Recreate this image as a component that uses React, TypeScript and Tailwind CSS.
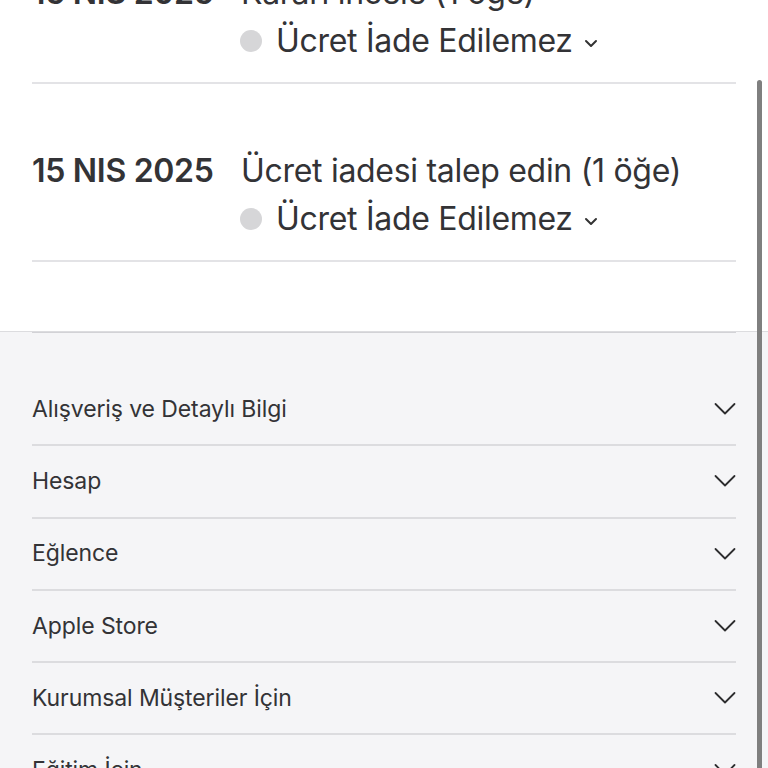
import React from 'react';

const font = { fontFamily: 'Inter, "Noto Sans", "Liberation Sans", sans-serif' };

function SmallChevron() {
  return (
    <svg width="16" height="10" viewBox="0 0 16 10" className="ml-[10px] mt-[4px]">
      <path d="M3 3 L8 8 L13 3" fill="none" stroke="#333" strokeWidth="2" strokeLinecap="round" strokeLinejoin="round" />
    </svg>
  );
}

function Chevron() {
  return (
    <svg width="22" height="14" viewBox="0 0 22 14">
      <path d="M1.5 2 L11 11.5 L20.5 2" fill="none" stroke="#2d2d2f" strokeWidth="1.8" strokeLinecap="round" strokeLinejoin="round" />
    </svg>
  );
}

interface RowProps {
  date: string;
  title: string;
  status: string;
  className?: string;
}

function RefundRow({ date, title, status, className = '' }: RowProps) {
  return (
    <div className={`border-b-2 border-[#e3e3e6] pb-[17px] ${className}`}>
      <div className="flex h-[48px] items-center">
        <span className="w-[209px] shrink-0 text-[32px] font-semibold tracking-[-0.3px] text-[#333336]">{date}</span>
        <span className="whitespace-nowrap text-[32px] tracking-[-0.3px] text-[#333336]">{title}</span>
      </div>
      <div className="flex h-[48px] items-center pl-[208px]">
        <span className="mr-[14px] h-[22px] w-[22px] rounded-full bg-[#d6d6d8]" />
        <span className="text-[32px] tracking-[-0.3px] text-[#333336]">{status}</span>
        <SmallChevron />
      </div>
    </div>
  );
}

const links = [
  'Alışveriş ve Detaylı Bilgi',
  'Hesap',
  'Eğlence',
  'Apple Store',
  'Kurumsal Müşteriler İçin',
  'Eğitim İçin',
];

export default function App() {
  return (
    <div className="relative h-[768px] w-[768px] overflow-hidden bg-white" style={font}>
      {/* order list */}
      <section className="px-[32px]">
        <RefundRow className="-mt-[31px]" date="15 NIS 2025" title="Kararı incele (1 öğe)" status="Ücret İade Edilemez" />
        <RefundRow className="pt-[63px]" date="15 NIS 2025" title="Ücret iadesi talep edin (1 öğe)" status="Ücret İade Edilemez" />
        <div className="h-[69px]" />
      </section>

      {/* footer nav */}
      <footer className="border-t border-[#dcdcdf] bg-[#f5f5f7] px-[32px]">
        <div className="h-[1px] bg-[#d2d2d6]" />
        <div className="pt-[41px]">
          {links.map((label) => (
            <div key={label} className="flex h-[72.25px] items-center justify-between border-b-2 border-[#dcdcdf]">
              <span className="text-[23px] tracking-[-0.1px] text-[#333336]">{label}</span>
              <Chevron />
            </div>
          ))}
        </div>
      </footer>

      {/* scrollbar */}
      <div className="absolute right-[6px] top-[80px] h-[720px] w-[5px] rounded-full bg-[#7f7f7f]" />
    </div>
  );
}
